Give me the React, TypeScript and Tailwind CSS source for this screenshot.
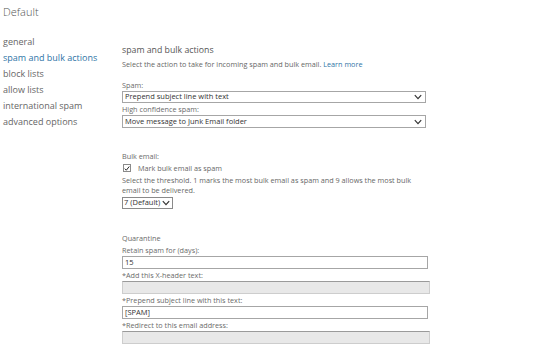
const NAV = [
  'general',
  'spam and bulk actions',
  'block lists',
  'allow lists',
  'international spam',
  'advanced options',
];

function Chevron() {
  return (
    <svg className="w-[8px] h-[6px] shrink-0" viewBox="0 0 8 6" fill="none">
      <path d="M0.8 1.2 L4 4.6 L7.2 1.2" stroke="#333" strokeWidth="1.2" />
    </svg>
  );
}

function Select({ value, tall }: { value: string; tall?: boolean }) {
  return (
    <div
      className={`${tall ? 'h-[13px]' : 'h-[12px]'} w-[304px] border border-[#a6a6a6] bg-white flex items-center justify-between pl-[2px] pr-[3px] text-[7.5px] text-[#333]`}
    >
      <span className="leading-none whitespace-nowrap">{value}</span>
      <Chevron />
    </div>
  );
}

function Label({ children }: { children: React.ReactNode }) {
  return (
    <div className="h-[12px] flex items-center whitespace-nowrap text-[7.25px] text-[#6a6a6a]">{children}</div>
  );
}

function TextBox({ value, disabled }: { value?: string; disabled?: boolean }) {
  return disabled ? (
    <div className="h-[13px] w-[308px] border border-[#cdcdcd] border-t-[#9a9a9a] bg-[#e8e8e8]" />
  ) : (
    <div className="h-[13px] w-[306px] border border-[#a6a6a6] bg-white flex items-center pl-[2px] text-[7.5px] text-[#333]">
      {value}
    </div>
  );
}

export default function App() {
  return (
    <div className="w-[540px] h-[356px] bg-white overflow-hidden font-['Open_Sans',sans-serif]">
      <div className="pl-[3px] pt-[4px] h-[30px] text-[11px] font-light text-[#555]">Default</div>

      <div className="flex">
        {/* left nav */}
        <div className="w-[122px] pl-[3px] pt-[4px]">
          {NAV.map((item) => (
            <div
              key={item}
              className={`h-[16px] flex items-center whitespace-nowrap text-[9px] ${
                item === 'spam and bulk actions' ? 'text-[#2e74a6]' : 'text-[#666]'
              }`}
            >
              {item}
            </div>
          ))}
        </div>

        {/* main panel */}
        <div className="w-[308px] pt-[14px]">
          <div className="h-[14px] flex items-center text-[8.75px] text-[#555]">spam and bulk actions</div>
          <div className="h-[12px] flex items-center whitespace-nowrap text-[7.25px] text-[#666]">
            Select the action to take for incoming spam and bulk email.&nbsp;
            <span className="text-[#2e74a6]">Learn more</span>
          </div>

          <div className="mt-[9px]">
            <Label>Spam:</Label>
            <Select value="Prepend subject line with text" />
            <Label>High confidence spam:</Label>
            <Select value="Move message to Junk Email folder" tall />
          </div>

          <div className="mt-[22px]">
            <Label>Bulk email:</Label>
            <div className="h-[12px] flex items-center gap-[7px] pl-[1px] text-[7.25px] text-[#666]">
              <div className="w-[8px] h-[8px] border border-[#8a8a8a] bg-white flex items-center justify-center">
                <svg viewBox="0 0 8 8" className="w-[7px] h-[7px]" fill="none">
                  <path d="M1 4.2 L3.1 6.3 L7 1.3" stroke="#222" strokeWidth="1.3" />
                </svg>
              </div>
              <span>Mark bulk email as spam</span>
            </div>
            <div className="text-[7.25px] leading-[10px] text-[#666] pt-[1px] whitespace-nowrap">
              Select the threshold. 1 marks the most bulk email as spam and 9 allows the most bulk
              <br />
              email to be delivered.
            </div>
            <div className="mt-[2px] w-[51px] h-[12px] border border-[#8a8a8a] bg-white flex items-center gap-[2px] pl-[1px] text-[7.5px] text-[#333]">
              <span className="leading-none whitespace-nowrap">7 (Default)</span>
              <Chevron />
            </div>
          </div>

          <div className="mt-[23px]">
            <Label>Quarantine</Label>
            <Label>Retain spam for (days):</Label>
            <TextBox value="15" />
            <Label>*Add this X-header text:</Label>
            <TextBox disabled />
            <Label>*Prepend subject line with this text:</Label>
            <TextBox value="[SPAM]" />
            <Label>*Redirect to this email address:</Label>
            <TextBox disabled />
          </div>
        </div>
      </div>
    </div>
  );
}
